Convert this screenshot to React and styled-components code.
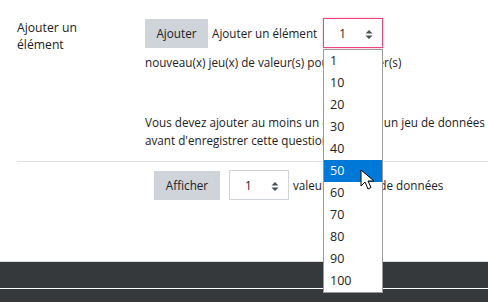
import React from 'react';
import styled, { createGlobalStyle } from 'styled-components';

const GlobalStyle = createGlobalStyle`
  html, body {
    margin: 0;
    padding: 0;
    background: #ffffff;
  }
  body {
    font-family: "Open Sans", "Noto Sans", sans-serif;
    font-size: 11.7px;
    color: #1d2125;
  }
`;

const options = ['1', '10', '20', '30', '40', '50', '60', '70', '80', '90', '100'];

const Page = styled.div`
  position: relative;
  display: flex;
  flex-direction: column;
  width: 488px;
  height: 302px;
  overflow: hidden;
`;

const Main = styled.div`
  flex: 1;
`;

const FormRow = styled.div`
  display: grid;
  grid-template-columns: 145px 1fr;
  padding-top: 18px;
`;

const Label = styled.div`
  padding: 1px 0 0 17px;
  line-height: 17px;
  width: 80px;
  font-size: 12.2px;
`;

const Content = styled.div`
  display: flex;
  flex-direction: column;
`;

const Line = styled.div`
  display: flex;
  align-items: center;
  gap: 4px;
  height: 30px;
`;

const Button = styled.div`
  display: flex;
  align-items: center;
  justify-content: center;
  width: ${(p) => p.$w}px;
  height: 29px;
  margin-right: ${(p) => p.$mr || 0}px;
  background: #ced4da;
  color: #1d2125;
  box-sizing: border-box;
`;

const Select = styled.div`
  position: relative;
  display: flex;
  align-items: center;
  box-sizing: border-box;
  width: 60px;
  height: 30px;
  margin-left: ${(p) => p.$ml || 0}px;
  padding-left: 15px;
  border: 1px solid ${(p) => (p.$focus ? '#f0457a' : '#ced4da')};
  box-shadow: ${(p) => (p.$focus ? '0 0 2px rgba(240, 69, 122, 0.45)' : 'none')};
  background: #fff;
`;

const Caret = styled.svg`
  position: absolute;
  right: 9px;
  top: 11px;
`;

const Text = styled.div`
  line-height: 18px;
  white-space: nowrap;
`;

const Help = styled(Text)`
  margin-top: 5px;
`;

const Notice = styled(Text)`
  margin-top: 42px;
`;

const Divider = styled.div`
  margin: 12px 0 0 17px;
  border-top: 1px solid #dee2e6;
`;

const ActionRow = styled(Line)`
  padding-left: 154px;
  margin-top: 8px;
`;

const Footer = styled.div`
  height: 40px;
  border-top: 1px solid #d8d8d8;
  background: #36393c;
  display: flex;
  flex-direction: column;
`;

const FooterLine = styled.div`
  margin-top: 26px;
  border-top: 1px solid #ffffff;
`;

const Dropdown = styled.ul`
  position: absolute;
  left: 323px;
  top: 49px;
  width: 60px;
  box-sizing: border-box;
  margin: 0;
  padding: 0;
  list-style: none;
  background: #fff;
  border: 1px solid #9a9a9a;
  font-family: "Open Sans", "Noto Sans", sans-serif;
  font-size: 12.5px;
`;

const Option = styled.li`
  height: 22px;
  line-height: 22px;
  padding-left: 6px;
  color: ${(p) => (p.$active ? '#ffffff' : '#1d2125')};
  background: ${(p) => (p.$active ? '#0078d7' : 'transparent')};
`;

const Cursor = styled.svg`
  position: absolute;
  left: 360px;
  top: 169px;
`;

const UpDown = () => (
  <Caret width="8" height="9" viewBox="0 0 8 9">
    <path d="M4 0 L7.5 3.5 H0.5 Z M4 9 L7.5 5.5 H0.5 Z" fill="#495057" />
  </Caret>
);

const App = () => {
  return (
    <Page>
      <GlobalStyle />
      <Main>
        <FormRow>
          <Label>Ajouter un élément</Label>
          <Content>
            <Line>
              <Button $w={63}>Ajouter</Button>
              <Text>Ajouter un élément</Text>
              <Select $focus $ml={2}>
                1
                <UpDown />
              </Select>
            </Line>
            <Help>nouveau(x) jeu(x) de valeur(s) pour le(s) joker(s)</Help>
            <Notice>
              Vous devez ajouter au moins un élément et un jeu de données
              <br />
              avant d'enregistrer cette question.
            </Notice>
          </Content>
        </FormRow>
        <Divider />
        <ActionRow>
          <Button $w={66} $mr={5}>Afficher</Button>
          <Select>
            1
            <UpDown />
          </Select>
          <Text>valeur(s) du jeu de données</Text>
        </ActionRow>
      </Main>
      <Footer>
        <FooterLine />
      </Footer>
      <Dropdown>
        {options.map((o) => (
          <Option key={o} $active={o === '50'}>
            {o}
          </Option>
        ))}
      </Dropdown>
      <Cursor width="17" height="22" viewBox="0 0 17 22">
        <path
          d="M1 1 L1 17 L5 13 L8 20 L11 18.5 L8 12 L14 12 Z"
          fill="#ffffff"
          stroke="#000000"
          strokeWidth="1"
          strokeLinejoin="round"
        />
      </Cursor>
    </Page>
  );
};

export default App;
